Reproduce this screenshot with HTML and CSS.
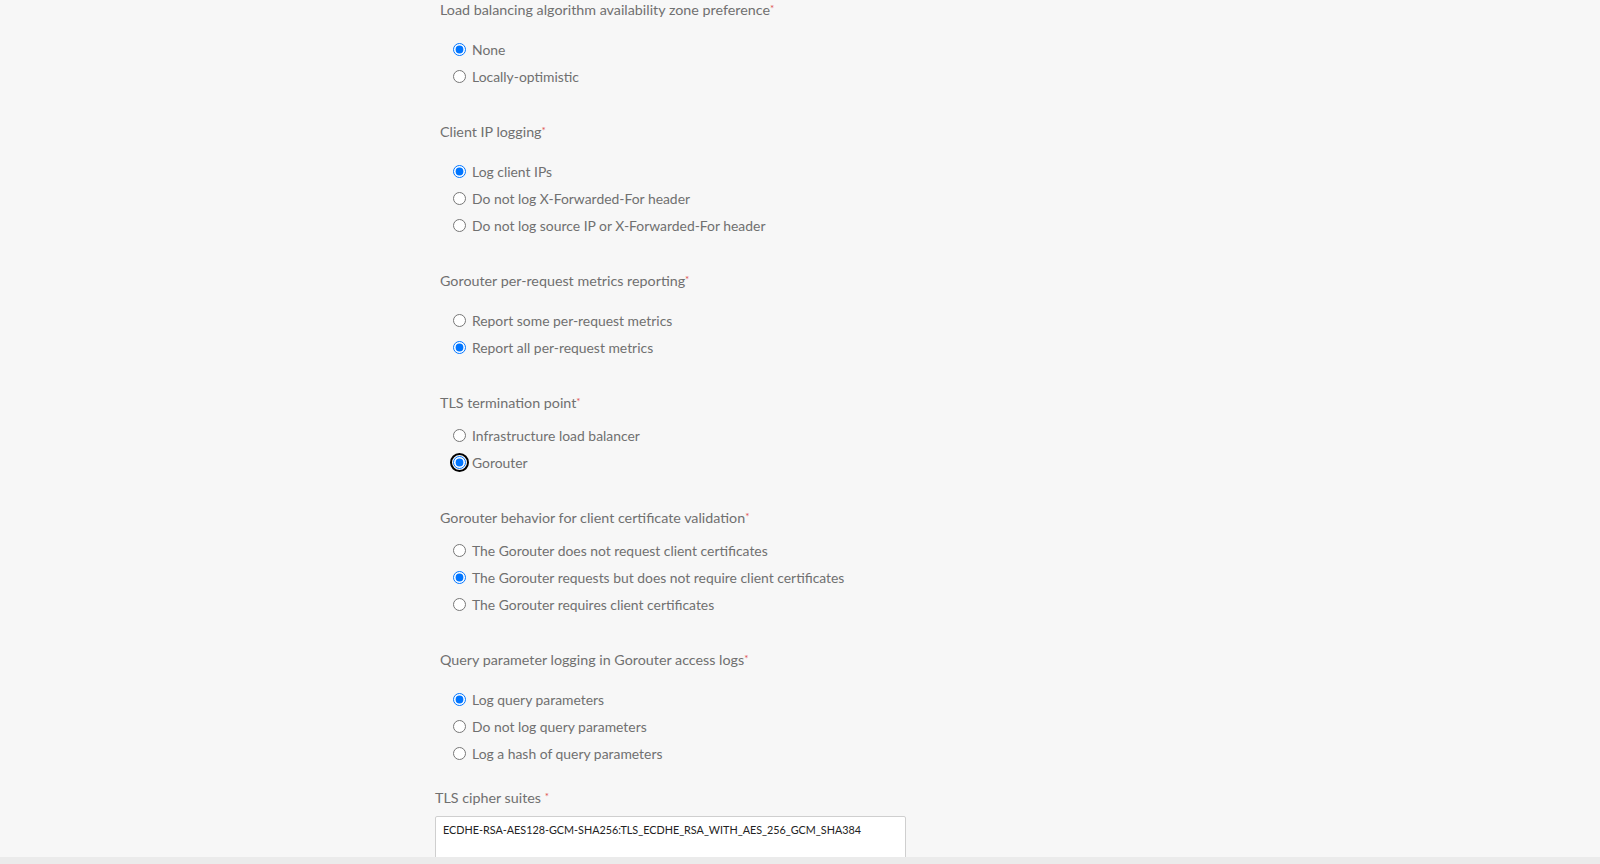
FILE: index.html
```html
<!DOCTYPE html>
<html lang="en">
<head>
    <meta charset="UTF-8">
    <meta name="viewport" content="width=device-width, initial-scale=1.0">
    <title>Networking</title>
    <link rel="stylesheet" href="styles.css">
</head>
<body>
    <main class="form">
        <div class="field">
            <div class="field-label">Load balancing algorithm availability zone preference<span class="req">*</span></div>
            <div class="options">
                <label class="option"><input type="radio" name="az" checked> None</label>
                <label class="option"><input type="radio" name="az"> Locally-optimistic</label>
            </div>
        </div>

        <div class="field">
            <div class="field-label">Client IP logging<span class="req">*</span></div>
            <div class="options">
                <label class="option"><input type="radio" name="ip" checked> Log client IPs</label>
                <label class="option"><input type="radio" name="ip"> Do not log X-Forwarded-For header</label>
                <label class="option"><input type="radio" name="ip"> Do not log source IP or X-Forwarded-For header</label>
            </div>
        </div>

        <div class="field">
            <div class="field-label">Gorouter per-request metrics reporting<span class="req">*</span></div>
            <div class="options">
                <label class="option"><input type="radio" name="metrics"> Report some per-request metrics</label>
                <label class="option"><input type="radio" name="metrics" checked> Report all per-request metrics</label>
            </div>
        </div>

        <div class="field">
            <div class="field-label">TLS termination point<span class="req">*</span></div>
            <div class="options tight">
                <label class="option"><input type="radio" name="tls"> Infrastructure load balancer</label>
                <label class="option"><span class="focus-ring"><input type="radio" name="tls" checked></span> Gorouter</label>
            </div>
        </div>

        <div class="field">
            <div class="field-label">Gorouter behavior for client certificate validation<span class="req">*</span></div>
            <div class="options tight">
                <label class="option"><input type="radio" name="cert"> The Gorouter does not request client certificates</label>
                <label class="option"><input type="radio" name="cert" checked> The Gorouter requests but does not require client certificates</label>
                <label class="option"><input type="radio" name="cert"> The Gorouter requires client certificates</label>
            </div>
        </div>

        <div class="field">
            <div class="field-label">Query parameter logging in Gorouter access logs<span class="req">*</span></div>
            <div class="options">
                <label class="option"><input type="radio" name="query" checked> Log query parameters</label>
                <label class="option"><input type="radio" name="query"> Do not log query parameters</label>
                <label class="option"><input type="radio" name="query"> Log a hash of query parameters</label>
            </div>
        </div>

        <div class="field text-field">
            <div class="field-label">TLS cipher suites <span class="req">*</span></div>
            <textarea class="ciphers">ECDHE-RSA-AES128-GCM-SHA256:TLS_ECDHE_RSA_WITH_AES_256_GCM_SHA384</textarea>
        </div>
    </main>

    <footer class="bottom-bar"></footer>
</body>
</html>
```

FILE: styles.css
```css
html {
    overflow: hidden;
}

body {
    margin: 0;
    padding: 0;
    background-color: #f7f7f7;
    font-family: 'Lato', 'Liberation Sans', sans-serif;
    font-size: 14px;
    color: #707070;
}

.form {
    width: 480px;
    margin-left: 440px;
}

.field {
    margin-bottom: 32px;
}

.field-label {
    font-size: 14.3px;
    line-height: 20px;
    color: #707070;
}

.req {
    color: #e0524f;
    font-size: 10px;
    vertical-align: top;
    line-height: 16px;
}

.options {
    margin-top: 16px;
    padding-left: 13px;
}

.options.tight {
    margin-top: 9px;
}

.option {
    display: flex;
    align-items: center;
    height: 27px;
    gap: 6px;
    font-size: 13.9px;
    color: #707070;
}

.option input {
    margin: 0;
    width: 13px;
    height: 13px;
    accent-color: #0075ff;
}

.focus-ring {
    display: flex;
    margin: -3px;
    padding: 1px;
    border: 2px solid #000;
    border-radius: 50%;
}

.text-field {
    margin-top: -11px;
    margin-left: -5px;
}

.text-field .field-label {
    margin-bottom: 8px;
}

.ciphers {
    display: block;
    box-sizing: border-box;
    width: 471px;
    height: 80px;
    margin: 0;
    padding: 6px 7px;
    border: 1px solid #cfcfcf;
    border-radius: 2px;
    background-color: #fff;
    font-family: 'Lato', 'Liberation Sans', sans-serif;
    font-size: 10.8px;
    line-height: 14px;
    color: #222;
    resize: none;
}

.bottom-bar {
    position: fixed;
    left: 0;
    right: 0;
    bottom: 0;
    height: 7px;
    background-color: #ebebeb;
}
```
